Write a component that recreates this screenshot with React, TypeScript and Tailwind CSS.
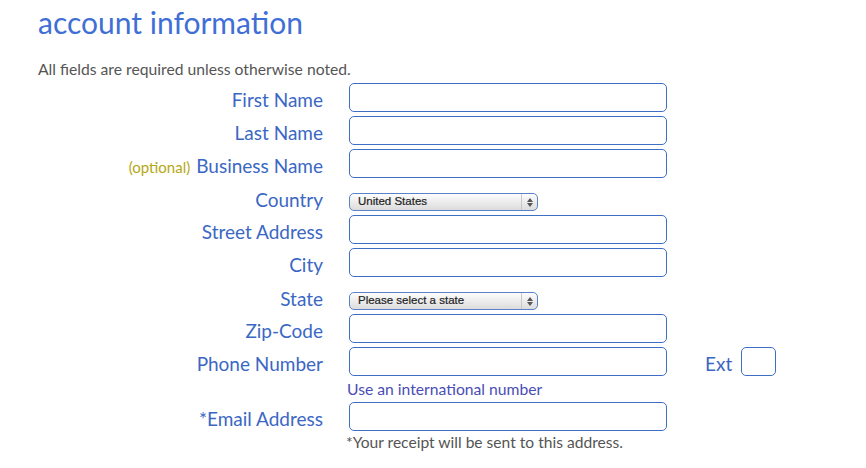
import React from 'react';

const font = { fontFamily: 'Lato, "Open Sans", sans-serif' };

function Field({ label, optional }: { label: string; optional?: boolean }) {
  return (
    <div className="flex h-[33px] items-center">
      <div className="w-[323px] text-right text-[19px] leading-none text-[#3b67c4] pt-[4px]">
        {optional && <span className="text-[15px] text-[#b5a716] mr-[6px]">(optional)</span>}
        {label}
      </div>
      <input className="ml-[26px] h-[29px] w-[318px] rounded-[5px] border border-[#3d6fc4] bg-white outline-none" />
    </div>
  );
}

function SelectField({ label, value }: { label: string; value: string }) {
  return (
    <div className="flex h-[33px] items-center">
      <div className="w-[323px] text-right text-[19px] leading-none text-[#3b67c4] pt-[6px]">{label}</div>
      <div className="ml-[26px] mt-[11px] flex h-[18px] w-[189px] items-center rounded-[5px] border border-[#5a82c8] bg-gradient-to-b from-[#fdfdfd] to-[#dcdcdc]">
        <span
          className="flex-1 pl-[8px] text-[11.5px] leading-none text-[#222]"
          style={{ fontFamily: '"Liberation Sans", Arial, sans-serif', WebkitTextStroke: '0.2px #222' }}
        >
          {value}
        </span>
        <div className="flex h-full w-[16px] flex-col items-center justify-center gap-[1px] border-l border-[#c8c8c8]">
          <svg width="6" height="4" viewBox="0 0 6 4"><path d="M3 0 L6 4 L0 4 Z" fill="#555" /></svg>
          <svg width="6" height="4" viewBox="0 0 6 4"><path d="M0 0 L6 0 L3 4 Z" fill="#555" /></svg>
        </div>
      </div>
    </div>
  );
}

export default function App() {
  return (
    <div className="h-[468px] w-[866px] bg-white" style={font}>
      <div className="pl-[38px] pt-[3px]">
        <h1 className="text-[30px] leading-[38px] text-[#3f6fd6]">account information</h1>
        <p className="mt-[19px] text-[15.7px] leading-[18px] text-[#555]">All fields are required unless otherwise noted.</p>
      </div>
      <div className="mt-[3px]">
        <Field label="First Name" />
        <Field label="Last Name" />
        <Field label="Business Name" optional />
        <SelectField label="Country" value="United States" />
        <Field label="Street Address" />
        <Field label="City" />
        <SelectField label="State" value="Please select a state" />
        <Field label="Zip-Code" />
        <div className="flex h-[33px] items-center">
          <div className="w-[323px] text-right text-[19px] leading-none text-[#3b67c4] pt-[4px]">Phone Number</div>
          <input className="ml-[26px] h-[29px] w-[318px] rounded-[5px] border border-[#3d6fc4] bg-white outline-none" />
          <span className="ml-[38px] text-[19px] leading-none text-[#3b67c4] pt-[4px]">Ext</span>
          <input className="ml-[9px] h-[29px] w-[35px] rounded-[5px] border border-[#3d6fc4] bg-white outline-none" />
        </div>
        <div className="h-[22px] pl-[347px] text-[15.7px] leading-[22px] text-[#4a4db5]">Use an international number</div>
        <Field label="*Email Address" />
        <div className="pl-[346px] text-[15.6px] leading-[18px] text-[#555]">*Your receipt will be sent to this address.</div>
      </div>
    </div>
  );
}
